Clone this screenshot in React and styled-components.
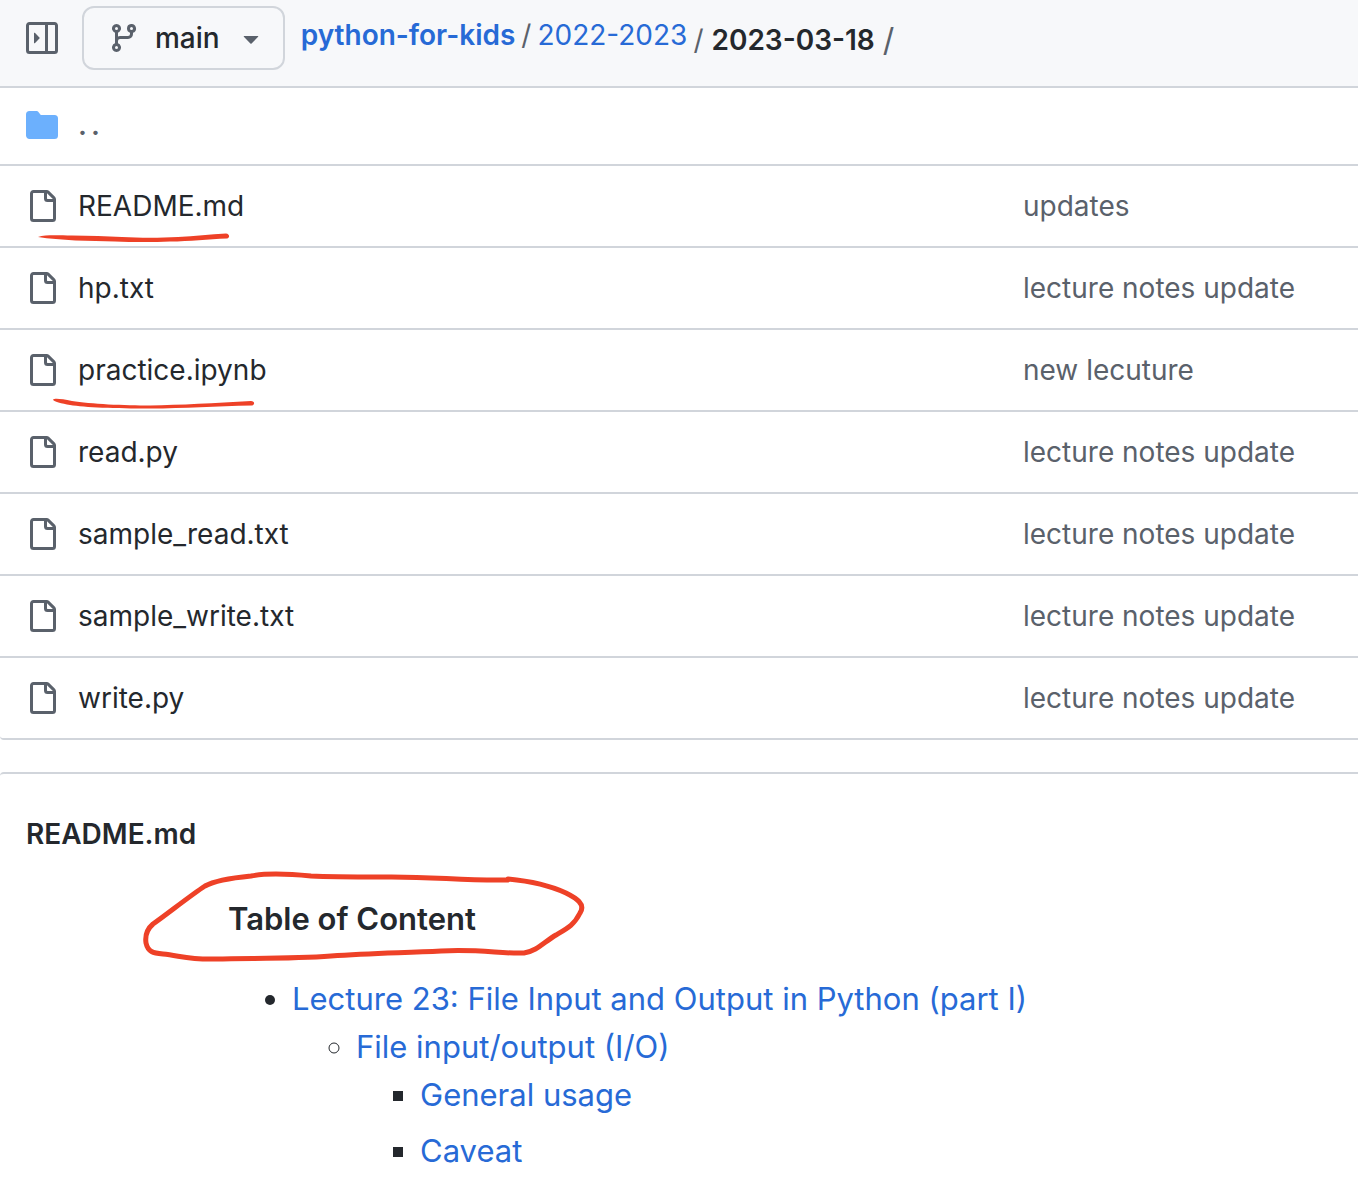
import React from "react";
import styled, { createGlobalStyle } from "styled-components";

const c = {
  text: "#24282d",
  muted: "#5a616b",
  link: "#276ad6",
  border: "#d1d5db",
  subtle: "#f7f8fa",
  folder: "#6cb0fd",
  marker: "#ee4127",
};

const GlobalStyle = createGlobalStyle`
  *, *::before, *::after { box-sizing: border-box; }
  body {
    margin: 0;
    background: #fff;
    color: ${c.text};
    font-family: Inter, "Liberation Sans", sans-serif;
    font-size: 28px;
    line-height: 40px;
  }
`;

const Octicon = styled.svg.attrs({ viewBox: "0 0 16 16", "aria-hidden": true })`
  width: 32px;
  height: 32px;
  flex: none;
  fill: ${(p) => p.$color || c.muted};
`;

const paths = {
  sidebar:
    "M6.823 7.823a.25.25 0 0 1 0 .354l-2.396 2.396A.25.25 0 0 1 4 10.396V5.604a.25.25 0 0 1 .427-.177ZM1.75 0h12.5C15.216 0 16 .784 16 1.75v12.5A1.75 1.75 0 0 1 14.25 16H1.75A1.75 1.75 0 0 1 0 14.25V1.75C0 .784.784 0 1.75 0ZM1.5 1.75v12.5c0 .138.112.25.25.25H9.5v-13H1.75a.25.25 0 0 0-.25.25ZM11 14.5h3.25a.25.25 0 0 0 .25-.25V1.75a.25.25 0 0 0-.25-.25H11Z",
  branch:
    "M9.5 3.25a2.25 2.25 0 1 1 3 2.122V6A2.5 2.5 0 0 1 10 8.5H6a1 1 0 0 0-1 1v1.128a2.251 2.251 0 1 1-1.5 0V5.372a2.25 2.25 0 1 1 1.5 0v1.836A2.493 2.493 0 0 1 6 7h4a1 1 0 0 0 1-1v-.628A2.25 2.25 0 0 1 9.5 3.25Zm-6 0a.75.75 0 1 0 1.5 0 .75.75 0 0 0-1.5 0Zm8.25-.75a.75.75 0 1 0 0 1.5.75.75 0 0 0 0-1.5ZM4.25 12a.75.75 0 1 0 0 1.5.75.75 0 0 0 0-1.5Z",
  triangle:
    "m4.427 7.427 3.396 3.396a.25.25 0 0 0 .354 0l3.396-3.396A.25.25 0 0 0 11.396 7H4.604a.25.25 0 0 0-.177.427Z",
  folder:
    "M1.75 1A1.75 1.75 0 0 0 0 2.75v10.5C0 14.216.784 15 1.75 15h12.5A1.75 1.75 0 0 0 16 13.25v-8.5A1.75 1.75 0 0 0 14.25 3H7.5a.25.25 0 0 1-.2-.1l-.9-1.2C6.07 1.26 5.55 1 5 1H1.75Z",
  file: "M2 1.75C2 .784 2.784 0 3.75 0h6.586c.464 0 .909.184 1.237.513l2.914 2.914c.329.328.513.773.513 1.237v9.586A1.75 1.75 0 0 1 13.25 16h-9.5A1.75 1.75 0 0 1 2 14.25Zm1.75-.25a.25.25 0 0 0-.25.25v12.5c0 .138.112.25.25.25h9.5a.25.25 0 0 0 .25-.25V6h-2.75A1.75 1.75 0 0 1 9 4.25V1.5Zm6.75.062V4.25c0 .138.112.25.25.25h2.688l-.011-.013-2.914-2.914-.013-.011Z",
};

const Icon = ({ name, color }) => (
  <Octicon $color={color}>
    <path d={paths[name]} />
  </Octicon>
);

const Toolbar = styled.header`
  display: flex;
  align-items: flex-start;
  padding: 6px 26px 16px;
  background: ${c.subtle};
  border-bottom: 2px solid ${c.border};
`;

const SidebarButton = styled.button`
  display: flex;
  align-items: center;
  height: 64px;
  margin-right: 24px;
  padding: 0;
  border: 0;
  background: none;
`;

const BranchButton = styled.button`
  display: flex;
  align-items: center;
  height: 64px;
  margin-right: 16px;
  padding: 0 16px 0 24px;
  border: 2px solid ${c.border};
  border-radius: 12px;
  background: ${c.subtle};
  color: ${c.text};
  font: inherit;
  font-weight: 500;
`;

const BranchName = styled.span`
  margin: 0 15px;
`;

const Breadcrumb = styled.nav`
  display: flex;
  align-items: flex-start;
  gap: 6px;
  padding-top: 9px;
`;

const CrumbGroup = styled.div`
  display: flex;
  align-items: center;
  gap: ${(p) => (p.$lowered ? "8px" : "6px")};
  padding-top: ${(p) => (p.$lowered ? "5px" : "0")};
`;

const Link = styled.a`
  color: ${c.link};
  text-decoration: none;
  font-weight: ${(p) => (p.$strong ? 600 : 400)};
`;

const Slash = styled.span`
  color: ${c.muted};
  font-size: ${(p) => (p.$large ? "32px" : "28px")};
`;

const Current = styled.h1`
  margin: 0;
  font-size: 28px;
  font-weight: 600;
`;

const Files = styled.table`
  width: 100%;
  table-layout: fixed;
  border-spacing: 0;
`;

const NameColumn = styled.col``;

const MessageColumn = styled.col`
  width: 335px;
`;

const Cell = styled.td`
  height: ${(p) => (p.$parent ? "78px" : "82px")};
  padding: ${(p) => (p.$parent ? "0 0 2px" : "0")};
  border-bottom: 2px solid ${c.border};
  vertical-align: middle;

  tr:last-child &:first-child {
    border-bottom-left-radius: 4px;
  }
`;

const FileName = styled.div`
  position: relative;
  display: flex;
  align-items: center;
  gap: 20px;
  padding-left: 26px;
`;

const FileLink = styled.a`
  color: ${(p) => (p.$parent ? c.muted : c.text)};
  font-weight: ${(p) => (p.$parent ? 600 : 400)};
  letter-spacing: ${(p) => (p.$parent ? "4px" : "normal")};
  text-decoration: none;
`;

const Message = styled.span`
  color: ${c.muted};
`;

const Mark = styled.svg.attrs({ "aria-hidden": true })`
  position: absolute;
  pointer-events: none;
  overflow: visible;
  fill: ${c.marker};
`;

const Underline = styled(Mark)`
  top: 40px;
  left: 0;
  width: 300px;
  height: 20px;
`;

const Loop = styled(Mark)`
  top: -25px;
  left: -87px;
  width: 450px;
  height: 100px;
  fill: none;
  stroke: ${c.marker};
  stroke-width: 5px;
  stroke-linecap: round;
  stroke-linejoin: round;
`;

const Readme = styled.section`
  margin-top: 32px;
  padding: 40px 26px 0;
  border-top: 2px solid ${c.border};
  border-top-left-radius: 4px;
`;

const ReadmeTitle = styled.h2`
  margin: 0;
  font-size: 28px;
  font-weight: 600;
`;

const Article = styled.article`
  padding: 41px 0 0 202px;
  font-size: 31px;
  line-height: 48px;
`;

const ContentTitle = styled.h3`
  position: relative;
  margin: 0 0 32px;
  font-size: 31px;
  font-weight: 600;
`;

const List = styled.ul`
  margin: 0;
  padding-left: 64px;
`;

const Item = styled.li`
  & + & {
    margin-top: 8px;
  }
`;

const underlines = {
  "README.md":
    "M38 11C46 8.500 58 9.500 72 9.500C90 10 106 10 122 11C140 12 160 12 178 11C195 10 210 8.500 226 7.500C230 8 230 12 227 12.500C208 13 190 15.500 170 15.500C150 16.500 130 16 115 15.500C90 15 60 14.500 38 11Z",
  "practice.ipynb":
    "M53 9.500C55 8 62 9 72 11C90 14 125 15.500 150 15.500C180 15 215 13 251 11C255 11 255 15 252 15.500C215 16 185 18.500 150 18.500C115 18.500 85 17.500 70 15C62 13.500 53 11.500 53 9.500Z",
};

const files = [
  ["README.md", "updates"],
  ["hp.txt", "lecture notes update"],
  ["practice.ipynb", "new lecuture"],
  ["read.py", "lecture notes update"],
  ["sample_read.txt", "lecture notes update"],
  ["sample_write.txt", "lecture notes update"],
  ["write.py", "lecture notes update"],
];

function FileRow({ name, message }) {
  return (
    <tr>
      <Cell>
        <FileName>
          <Icon name="file" />
          <FileLink href="#">{name}</FileLink>
          {underlines[name] && (
            <Underline>
              <path d={underlines[name]} />
            </Underline>
          )}
        </FileName>
      </Cell>
      <Cell>
        <Message>{message}</Message>
      </Cell>
    </tr>
  );
}

export default function App() {
  return (
    <>
      <GlobalStyle />
      <Toolbar>
        <SidebarButton aria-label="Expand file tree">
          <Icon name="sidebar" />
        </SidebarButton>
        <BranchButton>
          <Icon name="branch" />
          <BranchName>main</BranchName>
          <Icon name="triangle" />
        </BranchButton>
        <Breadcrumb aria-label="Breadcrumb">
          <CrumbGroup>
            <Link href="#" $strong>python-for-kids</Link>
            <Slash>/</Slash>
            <Link href="#">2022-2023</Link>
          </CrumbGroup>
          <CrumbGroup $lowered>
            <Slash>/</Slash>
            <Current>2023-03-18</Current>
            <Slash $large>/</Slash>
          </CrumbGroup>
        </Breadcrumb>
      </Toolbar>
      <main>
        <Files>
          <colgroup>
            <NameColumn />
            <MessageColumn />
          </colgroup>
          <tbody>
            <tr>
              <Cell colSpan={2} $parent>
                <FileName>
                  <Icon name="folder" color={c.folder} />
                  <FileLink href="#" $parent>..</FileLink>
                </FileName>
              </Cell>
            </tr>
            {files.map(([name, message]) => (
              <FileRow key={name} name={name} message={message} />
            ))}
          </tbody>
        </Files>
        <Readme>
          <ReadmeTitle>README.md</ReadmeTitle>
          <Article>
            <ContentTitle>
              Table of Content
              <Loop>
                <path d="M367 10C320 11 290 6 240 7C210 7 190 7 170 6C150 4 125 3 110 6C90 8 73 11 64 16C50 25 25 45 12 54C5 60 4 66 5 73C7 82 12 83 22 84C40 86 50 90 75 89C110 88 150 89 190 86C230 83 260 83 300 81C340 79 360 84 383 83C396 81 403 72 415 65C427 58 433 55 439 43C445 34 435 28 425 23C410 16 388 11 367 9" />
              </Loop>
            </ContentTitle>
            <List>
              <Item>
                <Link href="#">Lecture 23: File Input and Output in Python (part I)</Link>
                <List>
                  <Item>
                    <Link href="#">File input/output (I/O)</Link>
                    <List>
                      <Item>
                        <Link href="#">General usage</Link>
                      </Item>
                      <Item>
                        <Link href="#">Caveat</Link>
                      </Item>
                    </List>
                  </Item>
                </List>
              </Item>
            </List>
          </Article>
        </Readme>
      </main>
    </>
  );
}
